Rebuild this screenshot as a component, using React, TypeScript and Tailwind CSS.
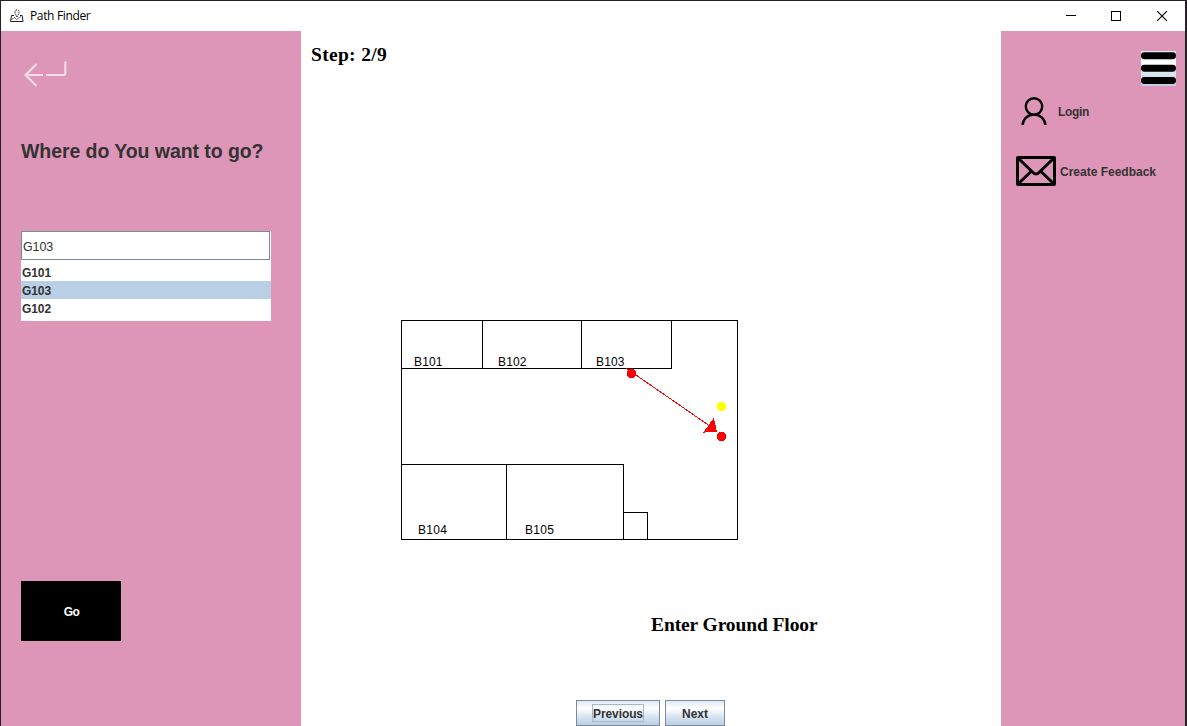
import React from "react";

const plots = ["G101", "G103", "G102"];

const rooms = [
  { label: "B101", x: 13 },
  { label: "B102", x: 97 },
  { label: "B103", x: 195 },
];

function TitleBar() {
  return (
    <header className="flex h-[30px] shrink-0 items-center bg-white">
      <svg className="ml-[9px] size-[14px] shrink-0" viewBox="0 0 14 14" fill="none" stroke="#222" strokeWidth="1">
        <path d="M4 6.500H1.500L.500 12.500h12.500l-.800-6H10" />
        <path d="M7 8C5.600 5.400 4.900 4.400 4.900 3a2.100 2.100 0 0 1 4.200 0C9.100 4.400 8.400 5.400 7 8z" strokeDasharray="1.500 .8" />
        <path d="M1.500 10.500l3-2 2 2 4.500-3" strokeDasharray="1.500 1" />
      </svg>
      <span className="ml-[6px] font-['Open_Sans',sans-serif] text-[12px] tracking-[-0.350px] text-black">
        Path Finder
      </span>
      <div className="ml-auto flex items-center pr-[18px]">
        <svg className="mr-[35px] size-[10px]" viewBox="0 0 10 10" shapeRendering="crispEdges">
          <path d="M0 4.500h10" stroke="#000" />
        </svg>
        <svg className="mr-[36px] size-[10px]" viewBox="0 0 10 10" fill="none" shapeRendering="crispEdges">
          <path d="M.5.500h9v9h-9z" stroke="#000" />
        </svg>
        <svg className="size-[10px]" viewBox="0 0 10 10">
          <path d="M0 0l10 10M10 0L0 10" stroke="#000" strokeWidth="1.100" />
        </svg>
      </div>
    </header>
  );
}

function SearchPanel() {
  return (
    <aside className="flex w-[300px] shrink-0 flex-col bg-[#de96b8] pl-[20px]">
      <button className="mt-[29px] ml-[3px] h-[28px] w-[43px]" aria-label="Back">
        <svg className="h-[28px] w-[43px]" viewBox="0 0 43 28" fill="none" stroke="#f0dbe6" strokeWidth="2.200">
          <path d="M12.500 4L1.500 15l11 11M1.500 15h17.500" />
          <path d="M22 15h17.500q1.800 0 1.800-1.800V1.500" />
        </svg>
      </button>
      <h1 className="mt-[49px] h-[28px] text-[19.500px] leading-[28px] font-bold tracking-[-0.070px] whitespace-nowrap text-[#333]">
        Where do You want to go?
      </h1>
      <div className="mt-[66px] w-[250px] bg-white">
        <div className="flex h-[29px] w-[249px] items-center border border-[#7a8a99] pt-[3px] pl-[1px] text-[12.500px] tracking-[-0.100px] text-[#333]">
          G103
        </div>
        <ul className="pt-[3px] pb-[4px] text-[12px] font-bold tracking-[-0.100px] text-[#333]">
          {plots.map((p) => (
            <li
              key={p}
              className={
                p === "G103"
                  ? "h-[18px] bg-[#b8cfe5] pl-[1px] leading-[20px]"
                  : "h-[18px] pl-[1px] leading-[20px]"
              }
            >
              {p}
            </li>
          ))}
        </ul>
      </div>
      <button className="mt-[260px] h-[60px] w-[100px] bg-black pt-[2px] pl-[1px] text-[12px] font-bold tracking-[-0.500px] text-white">
        Go
      </button>
    </aside>
  );
}

function FloorPlan() {
  return (
    <svg className="ml-[100px] h-[220px] w-[340px]" viewBox="0 0 340 220" fill="none">
      <g stroke="#000" shapeRendering="crispEdges">
        <path d="M.5.500h336v219H.500z" />
        <path d="M.5 48.500h270V.500M81.500.500v48M180.500.500v48" />
        <path d="M.5 144.500h222v75M105.500 144.500v75M222.500 192.500h24v27" />
      </g>
      <g fill="#000" fontSize="12">
        {rooms.map((r) => (
          <text key={r.label} x={r.x} y="46" textLength="28.500">
            {r.label}
          </text>
        ))}
        <text x="17" y="214" textLength="29">B104</text>
        <text x="124" y="214" textLength="29">B105</text>
      </g>
      <g shapeRendering="crispEdges">
        <path d="M225.500 48.500L316 111" stroke="#f00" />
        <path d="M312.800 98l3.200 13.800-14 .800z" fill="#f00" />
        <circle cx="230.500" cy="53.500" r="4.700" fill="#f00" />
        <circle cx="320.500" cy="116.500" r="4.700" fill="#f00" />
        <circle cx="320.500" cy="86.500" r="4.700" fill="#ff0" />
      </g>
    </svg>
  );
}

function StepView() {
  return (
    <main className="flex w-[700px] shrink-0 flex-col bg-white">
      <p className="mt-[12px] ml-[10px] h-[24px] font-['Liberation_Serif',serif] text-[19.500px] leading-[24px] font-bold tracking-[0.320px] text-black">
        Step: 2/9
      </p>
      <div className="mt-[253px]">
        <FloorPlan />
      </div>
      <p className="mt-[73px] ml-[350px] h-[24px] font-['Liberation_Serif',serif] text-[19.500px] leading-[24px] font-bold tracking-[-0.100px] whitespace-nowrap text-black">
        Enter Ground Floor
      </p>
      <div className="mt-auto flex justify-center gap-[5px] pr-[1px] text-[12px] font-bold text-[#333]">
        <button className="flex h-[26px] w-[84px] items-center justify-center border border-[#7a8a99] bg-[linear-gradient(#dde8f3,#fff_30%,#dde8f3_60%,#b8cfe5)]">
          <span className="flex h-[18px] w-[52px] items-center justify-center border border-[#a3b8cc] pt-[2px] tracking-[-0.100px]">Previous</span>
        </button>
        <button className="flex h-[26px] w-[60px] items-center justify-center border border-[#7a8a99] bg-[linear-gradient(#dde8f3,#fff_30%,#dde8f3_60%,#b8cfe5)] pt-[2px]">
          Next
        </button>
      </div>
    </main>
  );
}

function MenuPanel() {
  return (
    <aside className="flex grow flex-col bg-[#de96b8] text-[12px] font-bold text-[#333]">
      <button
        aria-label="Menu"
        className="mt-[20px] mr-[9px] size-[35px] self-end bg-[linear-gradient(#dde8f3,#fff_30%,#fff_40%,#dde8f3_60%,#b8cfe5)]"
      >
        <svg className="size-[35px]" viewBox="0 0 35 35">
          <rect x="0" y="1.300" width="35" height="6.900" rx="3.400" />
          <rect x="0" y="13.800" width="35" height="6.900" rx="3.400" />
          <rect x="0" y="26.100" width="35" height="6.900" rx="3.400" />
        </svg>
      </button>
      <div className="mt-[10px] ml-[20px] flex h-[30px] items-center">
        <svg className="h-[30px] w-[26px]" viewBox="0 0 26 30" fill="none" stroke="#000" strokeWidth="2.400">
          <circle cx="13" cy="10.500" r="8.200" />
          <path d="M1.600 29C2 23 6.500 18.600 13 18.600s11 4.400 11.400 10.400" />
        </svg>
        <span className="ml-[11px] pt-[2px] tracking-[-0.350px]">Login</span>
      </div>
      <div className="mt-[30px] ml-[15px] flex h-[30px] items-center">
        <svg className="h-[30px] w-[40px]" viewBox="0 0 40 30" fill="none" stroke="#000" strokeWidth="3">
          <rect x="1.500" y="1.500" width="37" height="27" rx=".5" />
          <path d="M2.500 2.500l14.500 14q3 3 6 0l14.500-14M2.500 27.500L15 15.500M37.500 27.500L25 15.500" />
        </svg>
        <span className="ml-[4px] pt-[2px] whitespace-nowrap">Create Feedback</span>
      </div>
    </aside>
  );
}

export default function App() {
  return (
    <div className="flex h-[726px] w-[1187px] flex-col overflow-hidden border-t border-r-2 border-l border-[#242124] bg-white font-['Liberation_Sans',Arial,sans-serif]">
      <TitleBar />
      <div className="flex min-h-0 grow">
        <SearchPanel />
        <StepView />
        <MenuPanel />
      </div>
    </div>
  );
}
